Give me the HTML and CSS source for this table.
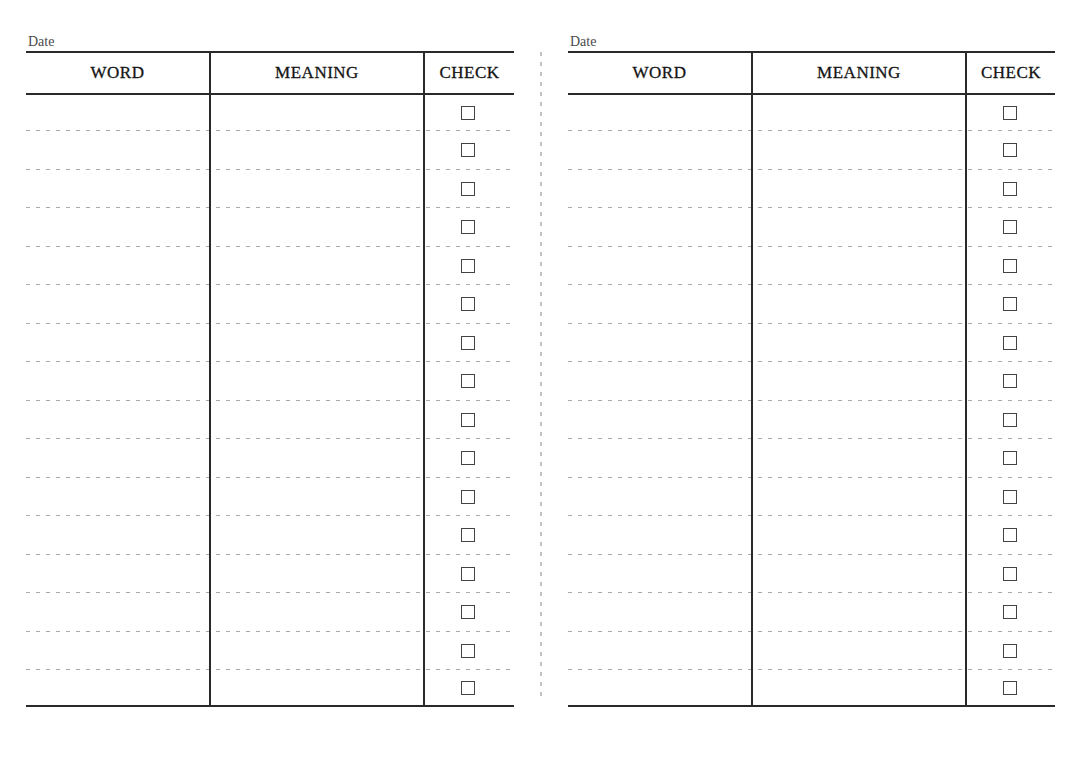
FILE: index.html
```html
<!DOCTYPE html>
<html lang="en">
<head>
<meta charset="utf-8">
<title>Vocabulary sheet</title>
<link rel="stylesheet" href="styles.css">
</head>
<body>
<div class="page">
  <section class="sheet sheet-left">
    <div class="date">Date</div>
    <div class="table">
      <div class="row head"><div class="cell">WORD</div><div class="cell">MEANING</div><div class="cell">CHECK</div></div>
      <div class="row"><div class="cell"></div><div class="cell"></div><div class="cell"><span class="box"></span></div></div>
      <div class="row"><div class="cell"></div><div class="cell"></div><div class="cell"><span class="box"></span></div></div>
      <div class="row"><div class="cell"></div><div class="cell"></div><div class="cell"><span class="box"></span></div></div>
      <div class="row"><div class="cell"></div><div class="cell"></div><div class="cell"><span class="box"></span></div></div>
      <div class="row"><div class="cell"></div><div class="cell"></div><div class="cell"><span class="box"></span></div></div>
      <div class="row"><div class="cell"></div><div class="cell"></div><div class="cell"><span class="box"></span></div></div>
      <div class="row"><div class="cell"></div><div class="cell"></div><div class="cell"><span class="box"></span></div></div>
      <div class="row"><div class="cell"></div><div class="cell"></div><div class="cell"><span class="box"></span></div></div>
      <div class="row"><div class="cell"></div><div class="cell"></div><div class="cell"><span class="box"></span></div></div>
      <div class="row"><div class="cell"></div><div class="cell"></div><div class="cell"><span class="box"></span></div></div>
      <div class="row"><div class="cell"></div><div class="cell"></div><div class="cell"><span class="box"></span></div></div>
      <div class="row"><div class="cell"></div><div class="cell"></div><div class="cell"><span class="box"></span></div></div>
      <div class="row"><div class="cell"></div><div class="cell"></div><div class="cell"><span class="box"></span></div></div>
      <div class="row"><div class="cell"></div><div class="cell"></div><div class="cell"><span class="box"></span></div></div>
      <div class="row"><div class="cell"></div><div class="cell"></div><div class="cell"><span class="box"></span></div></div>
      <div class="row"><div class="cell"></div><div class="cell"></div><div class="cell"><span class="box"></span></div></div>
    </div>
  </section>
  <div class="divider"><span class="divider-line"></span></div>
  <section class="sheet sheet-right">
    <div class="date">Date</div>
    <div class="table">
      <div class="row head"><div class="cell">WORD</div><div class="cell">MEANING</div><div class="cell">CHECK</div></div>
      <div class="row"><div class="cell"></div><div class="cell"></div><div class="cell"><span class="box"></span></div></div>
      <div class="row"><div class="cell"></div><div class="cell"></div><div class="cell"><span class="box"></span></div></div>
      <div class="row"><div class="cell"></div><div class="cell"></div><div class="cell"><span class="box"></span></div></div>
      <div class="row"><div class="cell"></div><div class="cell"></div><div class="cell"><span class="box"></span></div></div>
      <div class="row"><div class="cell"></div><div class="cell"></div><div class="cell"><span class="box"></span></div></div>
      <div class="row"><div class="cell"></div><div class="cell"></div><div class="cell"><span class="box"></span></div></div>
      <div class="row"><div class="cell"></div><div class="cell"></div><div class="cell"><span class="box"></span></div></div>
      <div class="row"><div class="cell"></div><div class="cell"></div><div class="cell"><span class="box"></span></div></div>
      <div class="row"><div class="cell"></div><div class="cell"></div><div class="cell"><span class="box"></span></div></div>
      <div class="row"><div class="cell"></div><div class="cell"></div><div class="cell"><span class="box"></span></div></div>
      <div class="row"><div class="cell"></div><div class="cell"></div><div class="cell"><span class="box"></span></div></div>
      <div class="row"><div class="cell"></div><div class="cell"></div><div class="cell"><span class="box"></span></div></div>
      <div class="row"><div class="cell"></div><div class="cell"></div><div class="cell"><span class="box"></span></div></div>
      <div class="row"><div class="cell"></div><div class="cell"></div><div class="cell"><span class="box"></span></div></div>
      <div class="row"><div class="cell"></div><div class="cell"></div><div class="cell"><span class="box"></span></div></div>
      <div class="row"><div class="cell"></div><div class="cell"></div><div class="cell"><span class="box"></span></div></div>
    </div>
  </section>
</div>
</body>
</html>
```

FILE: styles.css
```css
html, body {
  margin: 0;
  padding: 0;
  background: #ffffff;
}

body {
  width: 1080px;
  height: 763px;
  overflow: hidden;
  font-family: "Liberation Serif", "DejaVu Serif", serif;
  color: #222;
}

.page {
  display: flex;
  padding: 32px 0 0 26px;
}

.sheet {
  display: flex;
  flex-direction: column;
}

.sheet-left {
  width: 488px;
}

.sheet-right {
  width: 487px;
}

.date {
  height: 19px;
  line-height: 19px;
  font-size: 14px;
  color: #4a4a4a;
  padding-left: 2px;
}

.table {
  border-top: 2px solid #2a2a2a;
  border-bottom: 2px solid #2a2a2a;
  display: flex;
  flex-direction: column;
}

.row {
  display: grid;
  grid-template-columns: 183px 214px 1fr;
  height: 38.5px;
  box-sizing: border-box;
  background-image: linear-gradient(to right, #a9a9a9 4px, transparent 4px);
  background-size: 10px 1px;
  background-repeat: repeat-x;
  background-position: 0 100%;
}

.row:nth-child(2) {
  height: 36px;
}

.row:last-child {
  height: 35px;
  background-image: none;
}

.row.head {
  height: 42px;
  border-bottom: 2px solid #2a2a2a;
  background-image: none;
}

.cell {
  display: flex;
  align-items: center;
  justify-content: center;
}

.cell + .cell {
  border-left: 2px solid #2a2a2a;
}

.head .cell {
  font-size: 17px;
  letter-spacing: 0.5px;
  color: #151515;
  -webkit-text-stroke: 0.3px #151515;
  padding-bottom: 1px;
}

.box {
  display: block;
  width: 14px;
  height: 14px;
  box-sizing: border-box;
  border: 1.5px solid #444;
  margin-left: -3px;
}

.divider {
  width: 54px;
  display: flex;
  justify-content: center;
  padding-top: 20px;
}

.divider-line {
  display: block;
  width: 2px;
  height: 650px;
  background-image: linear-gradient(to bottom, #c2c2c2 4px, transparent 4px);
  background-size: 2px 10px;
  background-repeat: repeat-y;
}
```
